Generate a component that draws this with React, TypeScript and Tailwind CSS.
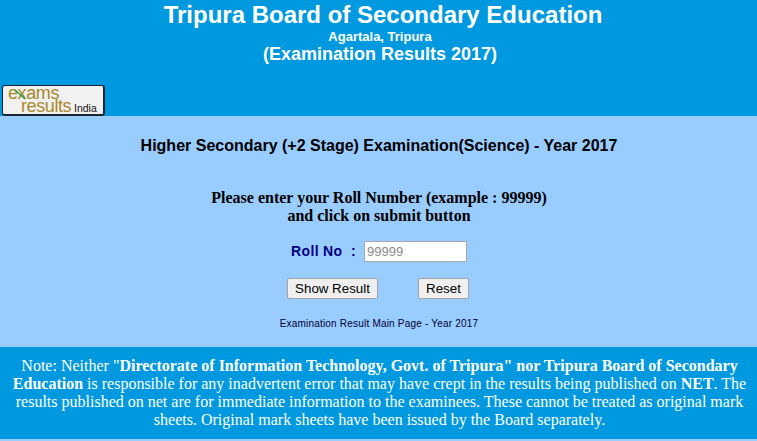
const arial = { fontFamily: '"Liberation Sans", Arial, sans-serif' };

function Logo() {
  return (
    <div className="relative h-[31px] w-[103px] rounded-[3px] border-2 border-t border-l border-[#1c2530] bg-[#f1f1f1]">
      <span className="absolute left-[5px] top-[-4px] text-[18px] leading-[22px] tracking-[-0.4px] text-[#a88a2c]">exams</span>
      <span className="absolute left-[18px] top-[9px] text-[18px] leading-[22px] tracking-[-0.4px] text-[#a88a2c]">results</span>
      <span className="absolute left-[71px] top-[16px] text-[10.5px] leading-[12px] text-[#111]">India</span>
      <svg className="absolute left-[11px] top-[3px]" width="14" height="12" viewBox="0 0 14 12">
        <path d="M1 1 L11 10" stroke="#2e9e4f" strokeWidth="1.5" fill="none" />
      </svg>
    </div>
  );
}

export default function App() {
  return (
    <div className="h-[441px] w-[757px] overflow-hidden bg-[#99ccff]" style={arial}>
      <header className="flex h-[116px] flex-col bg-[#0099e0] text-center font-bold text-white">
        <h1 className="mt-[1px] pl-[9px] text-[24px] leading-[28px]">Tripura Board of Secondary Education</h1>
        <p className="mt-[1px] pl-[3px] text-[13px] leading-[14px]">Agartala, Tripura</p>
        <p className="-mt-[1px] pl-[3px] text-[18px] leading-[22px]">(Examination Results 2017)</p>
        <div className="mt-auto ml-[2px] text-left font-normal">
          <Logo />
        </div>
      </header>

      <main className="flex h-[231px] flex-col items-center pl-[1px]">
        <h2 className="mt-[20px] text-[16px] leading-[20px] font-bold text-black">
          Higher Secondary (+2 Stage) Examination(Science) - Year 2017
        </h2>
        <p className="mt-[33px] text-center font-['Liberation_Serif',serif] text-[16px] leading-[18px] font-bold text-black">
          Please enter your Roll Number (example : 99999)
          <br />
          and click on submit button
        </p>
        <div className="mt-[16px] flex items-center">
          <label className="text-[14px] font-bold tracking-[0.35px] text-[#000080]">Roll No&nbsp; :</label>
          <input
            placeholder="99999"
            className="ml-[8px] h-[21px] w-[103px] border border-[#a9a9a9] bg-white px-[2px] text-[13px] text-black placeholder:text-[#8a8a8a]"
            style={arial}
          />
        </div>
        <div className="mt-[16px] mr-[2px] flex items-center">
          <button className="h-[21px] w-[91px] rounded-[2px] border border-[#a3a3a3] bg-[#efefef] text-[13.33px] text-black">
            Show Result
          </button>
          <button className="ml-[40px] h-[21px] w-[51px] rounded-[2px] border border-[#a3a3a3] bg-[#efefef] text-[13.33px] text-black">
            Reset
          </button>
        </div>
        <p className="mt-[19px] text-[10px] leading-[12px] tracking-[0.2px] text-[#000033]">
          Examination Result Main Page - Year 2017
        </p>
      </main>

      <footer className="flex h-[92px] items-center bg-[#0099e0] pr-[8px] pl-[10px] text-center font-['Liberation_Serif',serif] text-[16px] leading-[18px] text-white">
        <p>
          Note: Neither "<b>Directorate of Information Technology, Govt. of Tripura" nor Tripura Board of Secondary Education</b> is responsible for any inadvertent error that may have crept in the results being published on <b>NET</b>. The results published on net are for immediate information to the examinees. These cannot be treated as original mark sheets. Original mark sheets have been issued by the Board separately.
        </p>
      </footer>
    </div>
  );
}
